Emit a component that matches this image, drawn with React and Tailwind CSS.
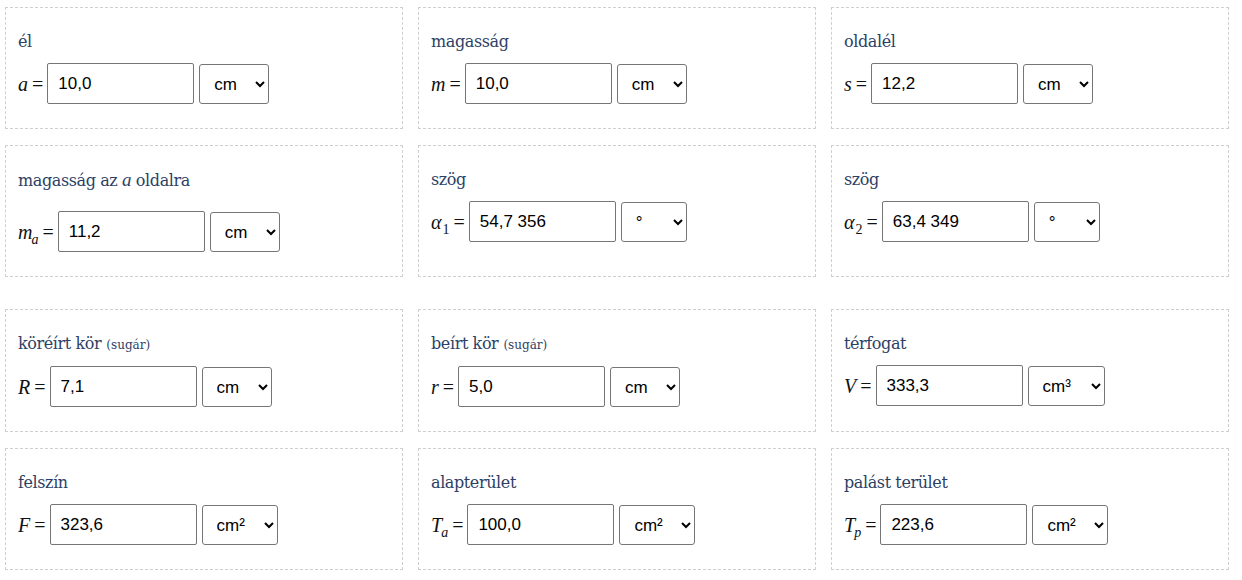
import React from "react";

// Gúla kalkulátor — mezők kártyákban, két csoportban.

const SERIF = "font-['Liberation_Serif',serif]";
const LABEL = "font-['DejaVu_Serif',serif]";
const SANS = "font-['Liberation_Sans',Arial,sans-serif]";

const UNITS = {
  cm: { options: ["mm", "cm", "dm", "m", "km"], value: "cm", w: "w-[70px]" },
  deg: { options: ["°", "rad"], value: "°", w: "w-[66px]" },
  cm2: { options: ["mm²", "cm²", "dm²", "m²"], value: "cm²", w: "w-[76px]" },
  cm3: { options: ["mm³", "cm³", "dm³", "m³"], value: "cm³", w: "w-[77px]" },
};

function Sym({ base, sub, greek, subItalic }) {
  return (
    <span className={`${SERIF} text-[20px] leading-none text-[#111] flex items-baseline whitespace-nowrap`}>
      <span className="italic">{base}</span>
      {sub ? (
        <span
          className={`text-[14px] relative top-[5px] ${subItalic ? "italic" : ""} ${
            greek ? "ml-[1px]" : "-ml-[1px]"
          }`}
        >
          {sub}
        </span>
      ) : null}
      <span className="ml-[4px]">=</span>
    </span>
  );
}

function Field({ label, small, sym, value, unit, tall }) {
  const u = UNITS[unit];
  return (
    <div className="border border-dashed border-[#cfcfcf] pl-[12px] pt-[22px] pb-[24px]">
      <div className={`${LABEL} text-[16px] tracking-[-0.4px] leading-[24px] text-[#2d3f66] whitespace-nowrap`}>
        {label}
        {small ? <span className="text-[12px] tracking-normal ml-[5px]">{small}</span> : null}
      </div>
      <div className={`flex items-center ${tall ? "mt-[18px]" : "mt-[9px]"}`}>
        {sym}
        <input
          readOnly
          value={value}
          className={`${SANS} ml-[4px] w-[147px] h-[41px] border border-[#767676] rounded-[2px] pl-[10px] text-[17px] text-black bg-white outline-none`}
        />
        <select
          defaultValue={u.value}
          className={`${SANS} ${u.w} ml-[5px] mt-[1px] h-[40px] border border-[#767676] rounded-[3px] pl-[10px] text-[17px] text-black bg-white`}
        >
          {u.options.map((o) => (
            <option key={o}>{o}</option>
          ))}
        </select>
      </div>
    </div>
  );
}

const A_INLINE = <span className={`${SERIF} italic text-[19px]`}>a</span>;

export default function App() {
  return (
    <div className="bg-white min-h-[580px] w-[1242px] pl-[5px] pt-[7px]">
      <div className="grid grid-cols-[398px_398px_398px] gap-x-[15px] gap-y-[16px]">
        <Field label="él" sym={<Sym base="a" />} value="10,0" unit="cm" />
        <Field label="magasság" sym={<Sym base="m" />} value="10,0" unit="cm" />
        <Field label="oldalél" sym={<Sym base="s" />} value="12,2" unit="cm" />
        <Field
          label={<>magasság az {A_INLINE} oldalra</>}
          sym={<Sym base="m" sub="a" subItalic />}
          value="11,2"
          unit="cm"
          tall
        />
        <Field label="szög" sym={<Sym base="α" sub="1" greek />} value="54,7 356" unit="deg" />
        <Field label="szög" sym={<Sym base="α" sub="2" greek />} value="63,4 349" unit="deg" />
      </div>
      <div className="mt-[32px] grid grid-cols-[398px_398px_398px] gap-x-[15px] gap-y-[16px]">
        <Field label="köréírt kör" small="(sugár)" sym={<Sym base="R" />} value="7,1" unit="cm" />
        <Field label="beírt kör" small="(sugár)" sym={<Sym base="r" />} value="5,0" unit="cm" />
        <Field label="térfogat" sym={<Sym base="V" />} value="333,3" unit="cm3" />
        <Field label="felszín" sym={<Sym base="F" />} value="323,6" unit="cm2" />
        <Field label="alapterület" sym={<Sym base="T" sub="a" subItalic />} value="100,0" unit="cm2" />
        <Field label="palást terület" sym={<Sym base="T" sub="p" subItalic />} value="223,6" unit="cm2" />
      </div>
    </div>
  );
}
